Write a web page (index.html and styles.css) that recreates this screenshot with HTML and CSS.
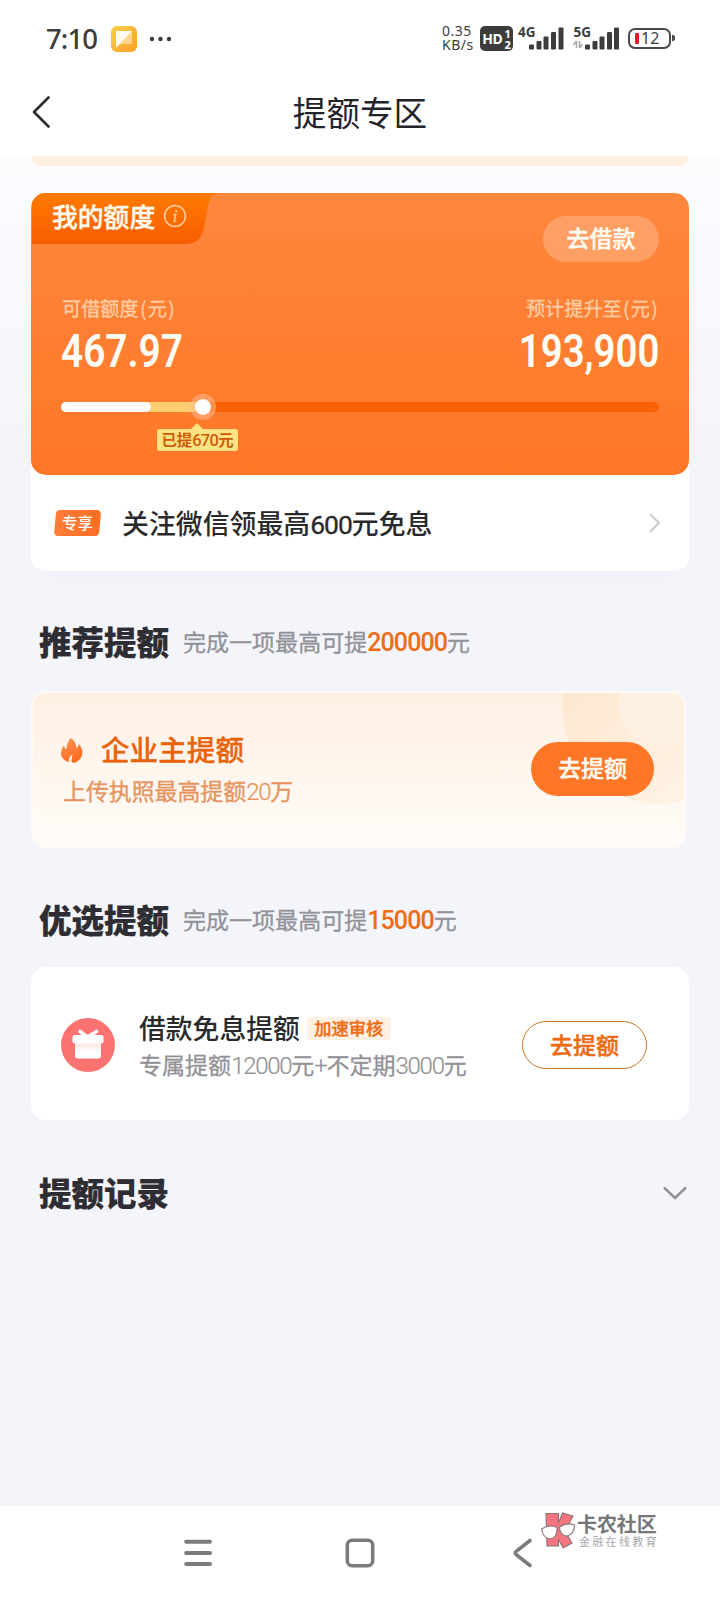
FILE: index.html
```html
<!DOCTYPE html>
<html lang="zh-CN">
<head>
<meta charset="utf-8">
<title>提额专区</title>
<link rel="stylesheet" href="styles.css">
</head>
<body>
<div class="screen">
  <div class="status">
    <span class="clock">7:10</span>
    <svg class="app-ico" width="26" height="26" viewBox="0 0 26 26">
      <defs><linearGradient id="g-app" x1="0" y1="0" x2="1" y2="1"><stop offset="0" stop-color="#f9d04b"/><stop offset="1" stop-color="#fd9d28"/></linearGradient></defs>
      <rect width="26" height="26" rx="6" fill="url(#g-app)"/>
      <path d="M5 5H21V18H10L5 22Z" fill="#ffd58c"/>
      <path d="M5 5H21L5 21.500Z" fill="#fffaf0"/>
    </svg>
    <svg class="dots" width="24" height="6" viewBox="0 0 24 6" fill="#3c3c3c"><circle cx="3" cy="3" r="2.200"/><circle cx="11.500" cy="3" r="2.200"/><circle cx="20" cy="3" r="2.200"/></svg>
    <div class="speed"><span>0.35</span><span>KB/s</span></div>
    <div class="hd"><b>HD</b><span class="hd-n"><i>1</i><i>2</i></span></div>
    <svg class="sig" width="47" height="26" viewBox="0 0 47 26">
      <text x="0" y="12" class="sig-t">4G</text>
      <g fill="#3c3c3c"><rect x="11" y="19.500" width="5" height="5" rx="1"/><rect x="18.500" y="16" width="5" height="8.500" rx="1"/><rect x="25.500" y="11.500" width="5" height="13" rx="1"/><rect x="33" y="7" width="5" height="17.500" rx="1"/><rect x="40.500" y="2.500" width="5" height="22" rx="1"/></g>
    </svg>
    <svg class="sig sig-2" width="49" height="26" viewBox="0 0 49 26">
      <text x="1.500" y="12" class="sig-t">5G</text>
      <path d="M4.500 16V23M4.500 16L1.500 20M7.500 16V23M7.500 23L10.500 19" stroke="#a9a9a9" stroke-width="1.600" fill="none"/>
      <g fill="#3c3c3c"><rect x="13" y="19.500" width="5" height="5" rx="1"/><rect x="20.500" y="16" width="5" height="8.500" rx="1"/><rect x="27.500" y="11.500" width="5" height="13" rx="1"/><rect x="35" y="7" width="5" height="17.500" rx="1"/><rect x="42" y="2.500" width="5" height="22" rx="1"/></g>
    </svg>
    <div class="batt"><i></i><span>12</span></div><div class="batt-cap"></div>
  </div>

  <div class="header">
    <svg class="back" width="20" height="34" viewBox="0 0 20 34"><path d="M17.500 2.500L3 17L17.500 31.500" fill="none" stroke="#2b2b30" stroke-width="2.700" stroke-linecap="round" stroke-linejoin="round"/></svg>
    <h1>提额专区</h1>
  </div>

  <div class="content">
    <div class="strip"></div>

    <div class="quota-wrap">
      <div class="quota">
        <div class="q-top">
          <div class="tab">
            <svg class="tab-bg" width="192" height="51" viewBox="0 0 192 51"><defs><linearGradient id="g-tab" x1="0" y1="0" x2="0" y2="1"><stop offset="0" stop-color="#ff7b00"/><stop offset="1" stop-color="#f85d00"/></linearGradient></defs><path d="M1 0H191Q180 0 178.500 6L172.500 36Q169 51 155 51H1Z" fill="url(#g-tab)"/></svg>
            <span class="tab-t">我的额度</span>
            <svg class="info" width="24" height="24" viewBox="0 0 24 24"><circle cx="12" cy="12" r="10.400" fill="none" stroke="#ffc48f" stroke-width="1.700"/><circle cx="13.200" cy="7.200" r="1.300" fill="#ffc48f"/><path d="M10.200 10.600H12.600L11.200 17.300H13.200" fill="none" stroke="#ffc48f" stroke-width="1.700"/></svg>
          </div>
          <div class="btn-loan">去借款</div>
        </div>
        <div class="labels"><span>可借额度<em>(</em>元<em>)</em></span><span>预计提升至<em>(</em>元<em>)</em></span></div>
        <div class="nums"><span class="n-l">467.97</span><span class="n-r">193,900</span></div>
        <div class="track">
          <div class="t-yellow"></div><div class="t-white"></div><div class="knob"></div>
        </div>
        <div class="tip">已提<span>670</span>元</div>
      </div>
      <div class="promo">
        <span class="excl"><span>专享</span></span>
        <span class="promo-t">关注微信领最高<span class="d600">600</span>元免息</span>
        <svg class="arr" width="14" height="22" viewBox="0 0 14 22"><path d="M2 2L11 11L2 20" fill="none" stroke="#c9c9cc" stroke-width="1.900"/></svg>
      </div>
    </div>

    <div class="sec sec-1"><h2>推荐提额</h2><p>完成一项最高可提<b>200000</b>元</p></div>

    <div class="card biz">
      <svg class="deco" width="123" height="112" viewBox="0 0 123 112"><defs><linearGradient id="g-deco" x1="0" y1="0" x2=".7" y2="1"><stop offset="0" stop-color="#ffe3c7"/><stop offset="1" stop-color="#fff3e7"/></linearGradient></defs><circle cx="98" cy="14" r="97" fill="url(#g-deco)"/><circle cx="100" cy="11" r="42.500" fill="#fff0e4"/></svg>
      <div class="biz-main">
        <div class="biz-h">
          <svg width="22" height="25" viewBox="0 0 22 25"><defs><linearGradient id="g-fire" x1="0" y1="0" x2=".4" y2="1"><stop offset="0" stop-color="#ff9a58"/><stop offset="1" stop-color="#ff6a20"/></linearGradient></defs><path d="M9.500 0C14 2.500 15.500 6.500 15 10C16.700 9 17.600 7.500 17.700 5.700C20.500 8.500 21.700 12 21.300 15.500C20.900 19.800 18 23 13.500 24.800C11.500 25.300 10.200 24 10.600 22L11.400 16.500C8.600 18.200 7.500 20.800 7.800 24.100C2.800 22.600 0 19.300 0 15C0 11.500 1.500 9 3.200 7.400C3.300 9.500 4.200 10.700 5.500 11.200C5.500 7 7 3.500 9.500 0Z" fill="url(#g-fire)"/></svg>
          <span>企业主提额</span>
        </div>
        <div class="biz-s">上传执照最高提额<span class="lt">20</span>万</div>
      </div>
      <div class="btn-fill">去提额</div>
    </div>

    <div class="sec sec-2"><h2>优选提额</h2><p>完成一项最高可提<b>15000</b>元</p></div>

    <div class="card loan">
      <svg class="gift" width="54" height="54" viewBox="0 0 54 54"><defs><linearGradient id="g-gift" x1="0" y1="0" x2="0" y2="1"><stop offset="0" stop-color="#ffe2de"/><stop offset=".6" stop-color="#fff"/></linearGradient></defs><circle cx="27" cy="27" r="27" fill="#fd7371"/><path d="M14 24H40V37.500Q40 40.500 37 40.500H17Q14 40.500 14 37.500Z" fill="url(#g-gift)"/><rect x="11.500" y="17" width="31" height="8.500" rx="2.200" fill="#fff"/><path d="M19 13.500L26.500 19L35.500 13.500" fill="none" stroke="#fff" stroke-width="3.600" stroke-linecap="round" stroke-linejoin="round"/></svg>
      <div class="loan-main">
        <div class="loan-h">借款免息提额<span class="badge">加速审核</span></div>
        <div class="loan-s">专属提额<span class="lt">12000</span>元<span class="lt">+</span>不定期<span class="lt">3000</span>元</div>
      </div>
      <div class="btn-line">去提额</div>
    </div>

    <div class="sec sec-3"><h2>提额记录</h2><svg width="26" height="16" viewBox="0 0 26 16"><path d="M2 2.500L13 13L24 2.500" fill="none" stroke="#929297" stroke-width="2.600"/></svg></div>
  </div>

  <div class="nav">
    <svg width="30" height="30" viewBox="0 0 30 30"><path d="M3.200 3.700H27M3.200 15H27M3.200 26H27" stroke="#7b7b7b" stroke-width="4" stroke-linecap="round"/></svg>
    <svg width="30" height="30" viewBox="0 0 30 30"><rect x="2.300" y="2.300" width="25.400" height="25.400" rx="5" fill="none" stroke="#7b7b7b" stroke-width="3.600"/></svg>
    <svg width="22" height="32" viewBox="0 0 22 32"><path d="M18 3.500L4.200 14.300Q2.300 16 4.200 17.700L18 28.500" fill="none" stroke="#7b7b7b" stroke-width="3.600" stroke-linecap="round"/></svg>
    <div class="mark">
      <svg width="36" height="38" viewBox="0 0 36 38"><g stroke="#8b7377" stroke-width="1.100"><path d="M6 1.500H18.500V11L22.500 1L33 4L25 19L32 31L23 36L18.500 27V34H7Z" fill="#f47480"/><path d="M1.500 17Q9 12 17 15.500Q17.500 26 10 27Q3 26 1.500 17Z" fill="#fff"/><path d="M19.500 15Q27 10 34.500 13Q34 23 27 24Q20 24 19.500 15Z" fill="#fff"/></g></svg>
      <div class="mark-t"><b>卡农社区</b><span>金融在线教育</span></div>
    </div>
  </div>
</div>
</body>
</html>
```
FILE: styles.css
```css
* { box-sizing: border-box; margin: 0; padding: 0; }
body {
  width: 720px;
  font-family: "Noto Sans CJK SC", sans-serif;
  color: #2d2d33;
}
svg { display: block; flex: none; }
em, i { font-style: normal; }
.screen {
  width: 720px;
  height: 1600px;
  display: flex;
  flex-direction: column;
  background: #fff;
  overflow: hidden;
  white-space: nowrap;
}

/* status bar */
.status { height: 76px; display: flex; padding-left: 46px; color: #3c3c3c; font-family: "Noto Sans", sans-serif; }
.clock { width: 65px; font-size: 27.500px; font-weight: 500; line-height: 38px; padding-top: 20px; letter-spacing: -0.900px; }
.app-ico { margin-top: 26px; }
.dots { margin: 36px 0 0 12px; }
.speed { margin: 24px 0 0 269px; width: 38px; display: flex; flex-direction: column; font-size: 14px; line-height: 14px; letter-spacing: .5px; }
.hd { margin-top: 26px; width: 33px; height: 25px; border-radius: 5px; background: #3c3c3c; color: #fff; display: flex; justify-content: center; align-items: center; font-size: 14px; line-height: 25px; }
.hd b { letter-spacing: -0.3px; }
.hd-n { display: flex; flex-direction: column; font-size: 11px; font-weight: 700; line-height: 11px; margin-left: 2px; }
.sig { margin: 25px 0 0 5px; }
.sig-2 { margin-left: 7px; }
.sig-t { font: 700 13.500px "Noto Sans", sans-serif; fill: #3c3c3c; }
.batt { margin: 28px 0 0 7px; width: 43px; height: 21px; border: 2px solid #4a4a4a; border-radius: 7px; display: flex; align-items: center; padding-left: 5px; font-size: 16px; line-height: 17px; }
.batt i { width: 4px; height: 11px; background: #e01f28; border-radius: 1px; margin-right: 2px; }
.batt-cap { width: 3px; height: 6px; margin: 35px 0 0 1px; background: #4a4a4a; border-radius: 0 2px 2px 0; }

/* title bar */
.header { height: 80px; display: flex; padding-left: 31px; }
.back { margin-top: 19px; }
.header h1 { width: 618px; text-align: center; font-size: 33.600px; font-weight: 400; line-height: 72px; color: #23232b; }

/* page body */
.content { height: 1350px; padding: 0 31px; background: linear-gradient(#fcfcff 0, #f4f5fa 300px); }
.strip { height: 10px; border-radius: 0 0 14px 14px; background: #ffefdf; }

/* quota card */
.quota-wrap { margin-top: 27px; height: 378px; border-radius: 15px; background: #fff; box-shadow: 0 18px 18px -12px rgba(60, 60, 110, .02); }
.quota { height: 282px; border-radius: 15px; overflow: hidden; background: linear-gradient(#ff873d, #ff7727); }
.q-top { display: flex; justify-content: space-between; height: 96px; }
.tab { position: relative; width: 192px; height: 51px; display: flex; }
.tab-bg { position: absolute; left: 0; top: 0; }
.tab-t { position: relative; margin-left: 21px; font-size: 25.800px; font-weight: 500; line-height: 45px; color: #fffaf0; -webkit-text-stroke: .4px #fffaf0; }
.info { position: relative; margin: 11px 0 0 8px; }
.btn-loan { margin: 23px 30px 0 0; width: 116px; height: 46px; border-radius: 23px; background: rgba(255, 255, 255, .22); color: #fffaf0; font-size: 23px; font-weight: 500; line-height: 43px; text-align: center; -webkit-text-stroke: .4px #fffaf0; }
.labels { display: flex; justify-content: space-between; padding: 0 30px 0 31px; height: 34px; font-size: 19.200px; line-height: 38px; color: #ffcda5; -webkit-text-stroke: .3px #ffcda5; }
.labels em { display: inline-block; width: 9px; text-align: center; }
.nums { display: flex; justify-content: space-between; padding: 0 30px; height: 79px; color: #fffdf5; font-family: Roboto, sans-serif; font-size: 46.500px; font-weight: 600; line-height: 57px; }
.n-l { transform: scaleX(.835); transform-origin: 0 0; }
.n-r { transform: scaleX(.825); transform-origin: 100% 0; }
.track { position: relative; margin: 0 30px; height: 10px; border-radius: 5px; background: #f66205; }
.t-yellow, .t-white { position: absolute; left: 0; top: 0; height: 10px; border-radius: 5px; }
.t-yellow { width: 142px; background: #ffcd70; }
.t-white { width: 90px; background: #fffdf9; }
.knob { position: absolute; left: 129px; top: -8px; width: 26px; height: 26px; border-radius: 50%; background: #fff; background-clip: padding-box; border: 5px solid rgba(255, 190, 150, .5); }
.tip { position: relative; margin: 17px 0 0 126px; width: 81px; height: 22px; border-radius: 3px; background: #ffe382; color: #cf5c08; font-size: 15.400px; font-weight: 700; line-height: 21px; text-align: center; }
.tip::before { content: ""; position: absolute; left: 34px; top: -6px; border: solid transparent; border-width: 0 6px 6px; border-bottom-color: #ffe382; }
.tip span { font-family: Roboto, sans-serif; font-size: 16.500px; font-weight: 500; line-height: 1; letter-spacing: -0.700px; }

.promo { height: 96px; display: flex; align-items: center; padding: 0 27px 0 24px; }
.excl { width: 45px; height: 26px; border-radius: 4px; transform: skewX(-5deg); background: linear-gradient(90deg, #ff7c38, #fd6d24); color: #fff; font-size: 15.500px; font-weight: 500; line-height: 25px; text-align: center; }
.excl span { display: block; transform: skewX(5deg); }
.promo-t { flex: 1; margin-left: 22px; font-size: 26.880px; font-weight: 500; line-height: 40px; color: #2a2a2c; }
.d600 { font-family: Roboto, sans-serif; font-size: 26.500px; font-weight: 400; line-height: 1; letter-spacing: -1px; -webkit-text-stroke: .3px #2a2a2c; }

/* section headings */
.sec { display: flex; align-items: center; height: 48px; padding-left: 8px; }
.sec h2 { width: 131px; font-size: 32.500px; font-weight: 900; line-height: 46px; margin-top: -2px; -webkit-text-stroke: .2px #2d2d33; }
.sec p { margin: -3px 0 0 13px; font-size: 23.040px; line-height: 46px; color: #929299; -webkit-text-stroke: .3px #929299; }
.sec b { font-family: Roboto, sans-serif; font-size: 25px; font-weight: 500; line-height: 1; letter-spacing: -0.9px; color: #ee6c14; -webkit-text-stroke: 0; }
.sec-1 { margin-top: 47px; }
.sec-2 { margin-top: 48px; }
.sec-3 { margin-top: 49px; padding-right: 1px; justify-content: space-between; }
.sec-3 h2 { margin-top: -3px; }

/* offers */
.lt { font-family: Roboto, sans-serif; font-size: 24px; font-weight: 300; line-height: 1; letter-spacing: -1.300px; }
.card { position: relative; display: flex; border-radius: 15px; overflow: hidden; }
.biz { width: 655px; height: 157px; margin-top: 25px; border: 2px solid #fffaf6; background: linear-gradient(#fff0e3, #fffcf8); }
.deco { position: absolute; right: 0; top: 0; }
.biz-main { flex: 1; padding: 37px 0 0 28px; }
.biz-h { display: flex; align-items: center; height: 40px; color: #e9630b; font-size: 28.600px; font-weight: 500; line-height: 40px; -webkit-text-stroke: .3px #e9630b; }
.biz-h span { margin: -2px 0 0 18px; }
.biz-s { padding-left: 2px; font-size: 22.900px; line-height: 41px; color: #e6935e; -webkit-text-stroke: .3px #e6935e; }
.biz-s .lt, .loan-s .lt { -webkit-text-stroke: .2px; }
.btn-fill { position: relative; margin: 49px 30px 0 0; width: 123px; height: 54px; border-radius: 27px; background: #ff7726; color: #fffaf0; font-size: 23px; font-weight: 500; line-height: 51px; text-align: center; -webkit-text-stroke: .4px #fffaf0; }
.loan { height: 153px; margin-top: 23px; padding-left: 30px; background: #fff; }
.gift { margin-top: 51px; }
.loan-main { flex: 1; padding: 42px 0 0 24px; }
.loan-h { display: flex; align-items: center; height: 38px; font-size: 26.800px; font-weight: 500; line-height: 38px; color: #2a2a2c; }
.badge { margin-left: 7px; width: 84px; height: 23px; border-radius: 3px; background: #fff0e4; color: #f0680f; font-size: 17.280px; font-weight: 500; line-height: 22px; text-align: center; -webkit-text-stroke: .3px #f0680f; }
.loan-s { font-size: 23.040px; line-height: 34px; color: #929297; -webkit-text-stroke: .3px #929297; }
.btn-line { margin: 54px 42px 0 0; width: 125px; height: 48px; border: 1px solid #cd7830; border-radius: 24px; color: #ec6a12; font-size: 23px; font-weight: 500; line-height: 44px; text-align: center; -webkit-text-stroke: .4px #ec6a12; }

/* system navigation */
.nav { height: 94px; display: flex; padding: 32px 0 0 183px; background: #fff; }
.nav > svg:nth-child(2) { margin-left: 132px; }
.nav > svg:nth-child(3) { margin: -1px 0 0 137px; }
.mark { display: flex; margin: -26px 0 0 6px; }
.mark-t { display: flex; flex-direction: column; margin-left: 1px; color: #77777a; }
.mark-t b { font-size: 20px; line-height: 24px; letter-spacing: -0.100px; }
.mark-t span { margin: -3px 0 0 2px; font-size: 11px; line-height: 16px; letter-spacing: 2.300px; color: #a8a8ab; }
```
